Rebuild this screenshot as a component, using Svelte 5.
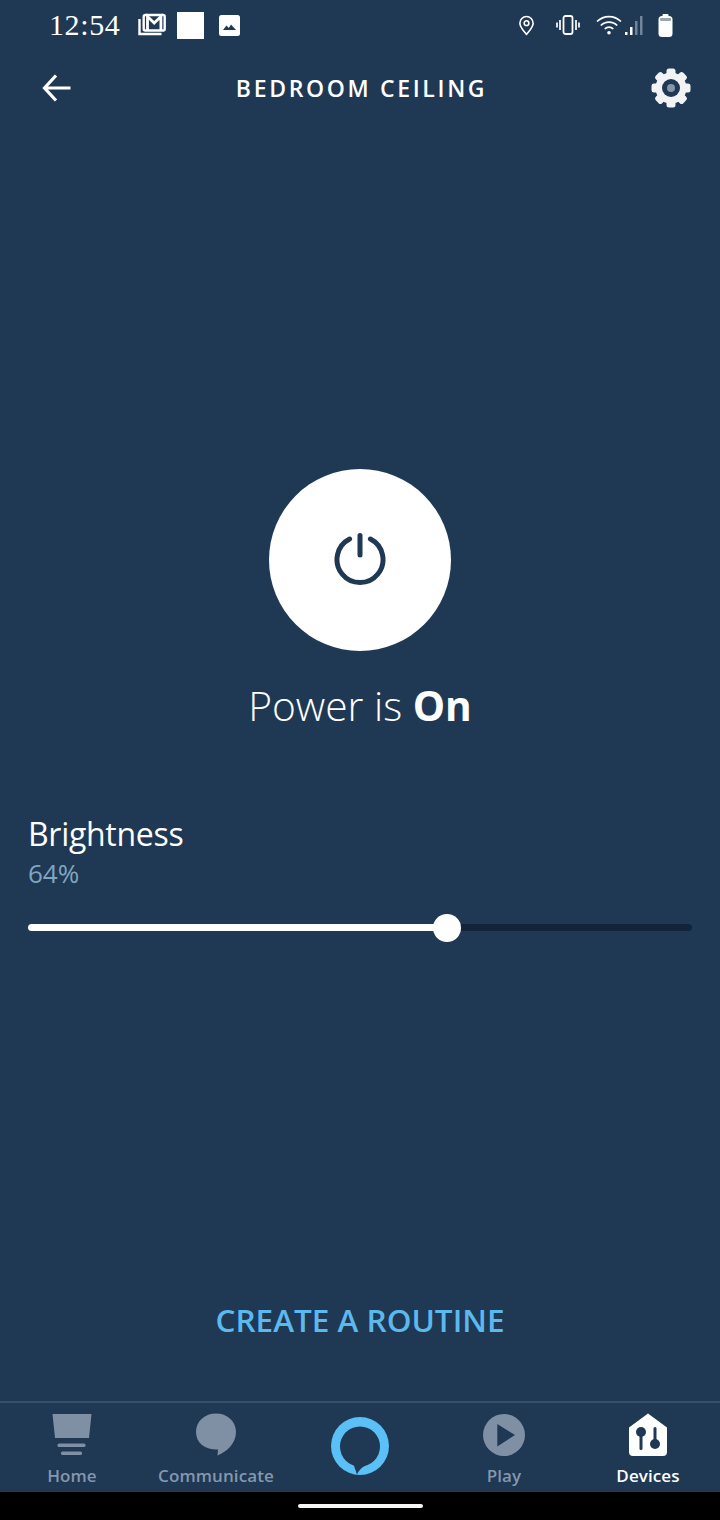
<script>
  const tabs = [
    { id: 'home', label: 'Home' },
    { id: 'comm', label: 'Communicate' },
    { id: 'alexa', label: '' },
    { id: 'play', label: 'Play' },
    { id: 'devices', label: 'Devices', active: true }
  ];
  const brightness = 64;
  const teeth = [0, 45, 90, 135];
</script>

<div class="screen">
  <div class="status">
    <span class="time">12:54</span>
    <svg class="ic-gmail" viewBox="0 0 28 24" width="28" height="24">
      <path d="M1.500 6v15h22" fill="none" stroke="#fff" stroke-width="2.400"/>
      <rect x="5.700" y="2" width="21" height="15.500" rx="1.500" fill="none" stroke="#fff" stroke-width="2.400"/>
      <path d="M9.500 17V3.500l6.700 6.500 6.700-6.500V17" fill="none" stroke="#fff" stroke-width="2.800"/>
    </svg>
    <span class="square"></span>
    <svg class="ic-photo" viewBox="0 0 21 21" width="21" height="21">
      <rect width="21" height="21" rx="2.500" fill="#fff"/>
      <path d="M4 15l3.500-4.500 2.300 2.500 2.200-3.500 5 5.500z" fill="#1f3853"/>
    </svg>
    <span class="spacer"></span>
    <svg class="ic-pin" viewBox="0 0 18 22" width="17" height="21">
      <path d="M9 20.500C5 15.500 2 12.500 2 8.500a7 7 0 0 1 14 0c0 4-3 7-7 12z" fill="none" stroke="#fff" stroke-width="1.700" stroke-linejoin="round"/>
      <circle cx="9" cy="8.500" r="2.500" fill="none" stroke="#fff" stroke-width="1.700"/>
    </svg>
    <svg class="ic-vib" viewBox="0 0 24 20" width="24" height="20">
      <rect x="7.500" y="1" width="9" height="18" rx="2" fill="none" stroke="#fff" stroke-width="1.800"/>
      <path d="M4 5v10M1 7.500v5M20 5v10M23 7.500v5" stroke="#fff" stroke-width="1.700"/>
    </svg>
    <svg class="ic-wifi" viewBox="0 0 26 20" width="26" height="20">
      <path d="M1 6.500a17 17 0 0 1 24 0M4.800 10.500a11.500 11.500 0 0 1 16.400 0M8.700 14a6 6 0 0 1 8.600 0" fill="none" stroke="#fff" stroke-width="1.700"/>
      <circle cx="13" cy="17.800" r="1.800" fill="#fff"/>
    </svg>
    <svg class="ic-signal" viewBox="0 0 19 21" width="19" height="21">
      <rect x="0" y="17" width="2.500" height="3" fill="#fff"/>
      <rect x="5" y="12" width="2.500" height="8" fill="#fff"/>
      <rect x="10" y="6" width="2.500" height="14" fill="#71849a"/>
      <rect x="15" y="1" width="2.500" height="19" fill="#71849a"/>
    </svg>
    <svg class="ic-batt" viewBox="0 0 15 23" width="15" height="23">
      <rect x="4.500" y="0" width="6" height="3" rx="1" fill="#fff"/>
      <rect x="0.500" y="2" width="14" height="21" rx="3.500" fill="#fff"/>
      <rect x="2" y="4" width="11" height="3" rx="1" fill="#1f3853" opacity="0.450"/>
    </svg>
  </div>

  <header class="bar">
    <button class="iconbtn" aria-label="Back">
      <svg viewBox="0 0 30 30" width="30" height="30">
        <path d="M2.500 15h26M14 2.500 2.500 15 14 27.500" fill="none" stroke="#fff" stroke-width="3.200"/>
      </svg>
    </button>
    <h1>BEDROOM CEILING</h1>
    <button class="iconbtn" aria-label="Settings">
      <svg viewBox="0 0 40 40" width="40" height="40">
        {#each teeth as a}
          <rect x="15.500" y="0.500" width="9" height="39" rx="2.500" fill="#f2f3f4" transform="rotate({a} 20 20)"/>
        {/each}
        <circle cx="20" cy="20" r="15.500" fill="#f2f3f4"/>
        <circle cx="20" cy="20" r="9" fill="#1f3853"/>
        <circle cx="20" cy="20" r="4" fill="#8496a8"/>
      </svg>
    </button>
  </header>

  <main>
    <section class="power">
      <button class="power-btn" aria-label="Toggle power">
        <svg viewBox="0 0 52 54" width="52" height="54">
          <path d="M15.600 6a23 23 0 1 0 20.800 0" fill="none" stroke="#1f3853" stroke-width="5" stroke-linecap="round"/>
          <path d="M26 2.500v19.500" stroke="#1f3853" stroke-width="5" stroke-linecap="round"/>
        </svg>
      </button>
      <p class="power-label">Power is <strong>On</strong></p>
    </section>

    <section class="brightness">
      <div class="b-title">Brightness</div>
      <div class="b-value">{brightness}%</div>
      <div class="track">
        <div class="fill" style="width: {brightness - 0.85}%">
          <span class="thumb"></span>
        </div>
      </div>
    </section>

    <div class="routine">CREATE A ROUTINE</div>
  </main>

  <nav class="tabs">
    {#each tabs as t}
      <div class="tab" class:active={t.active}>
        {#if t.id === 'home'}
          <svg viewBox="0 0 40 44" width="40" height="44">
            <path d="M0.500 1h39l-2.500 24H3z" fill="#7f90a5"/>
            <rect x="5.500" y="30.500" width="28" height="3.500" rx="1.500" fill="#7f90a5"/>
            <rect x="9" y="38.500" width="21" height="3.500" rx="1.500" fill="#7f90a5"/>
          </svg>
        {:else if t.id === 'comm'}
          <svg viewBox="0 0 40 44" width="40" height="44">
            <path d="M20 0.500C31 0.500 40 8 40 19c0 12-10 20-18.500 23.500L22 36.500C9 37 0 30 0 19 0 8 9 .5 20 .5z" fill="#7f90a5"/>
          </svg>
        {:else if t.id === 'alexa'}
          <svg class="alexa" viewBox="0 0 58 58" width="58" height="58">
            <circle cx="29" cy="29" r="29" fill="#5bc0f5"/>
            <circle cx="29" cy="29.500" r="20" fill="#1f3853"/>
            <path d="M22 46 L26 57.500 Q28 52 35 48z" fill="#1f3853"/>
          </svg>
        {:else if t.id === 'play'}
          <svg viewBox="0 0 44 44" width="42" height="42">
            <circle cx="22" cy="22" r="22" fill="#7f90a5"/>
            <path d="M15 10.500v23.500L33.500 22z" fill="#1f3853"/>
          </svg>
        {:else}
          <svg viewBox="0 0 40 44" width="40" height="42">
            <path d="M20 0.500 39 14.500V39a4 4 0 0 1-4 4H5a4 4 0 0 1-4-4V14.500z" fill="#fff"/>
            <circle cx="13" cy="19" r="5" fill="#1f3853"/>
            <rect x="11.500" y="20" width="3" height="17" rx="1.500" fill="#1f3853"/>
            <circle cx="27" cy="31" r="5" fill="#1f3853"/>
            <rect x="25.500" y="14" width="3" height="18" rx="1.500" fill="#1f3853"/>
          </svg>
        {/if}
        {#if t.label}<span>{t.label}</span>{/if}
      </div>
    {/each}
  </nav>

  <div class="gesture"><span></span></div>
</div>

<style>
  :global(body) { margin: 0; background: #1f3853; }
  .screen {
    width: 720px;
    height: 1520px;
    display: flex;
    flex-direction: column;
    background: #1f3853;
    color: #fff;
    font-family: "Open Sans", "Noto Sans", sans-serif;
    overflow: hidden;
  }
  .status {
    height: 52px;
    box-sizing: border-box;
    padding: 0 47px 2px 49px;
    display: flex;
    align-items: center;
  }
  .time { font-family: "Liberation Serif", serif; font-size: 30px; letter-spacing: 0.6px; width: 89px; }
  .ic-gmail { margin-right: 11px; }
  .square { width: 27px; height: 27px; background: #fff; margin-right: 15px; }
  .spacer { flex: 1; }
  .ic-vib { margin-left: 21px; }
  .ic-wifi { margin-left: 16px; }
  .ic-signal { margin-left: 3px; }
  .ic-batt { margin-left: 14px; }
  .bar {
    height: 72px;
    padding: 0 29px 0 42px;
    display: flex;
    align-items: center;
    justify-content: space-between;
  }
  .bar h1 {
    margin: 0;
    font-size: 23px;
    font-weight: 600;
    letter-spacing: 2.65px;
    line-height: 1;
  }
  .iconbtn { background: none; border: 0; padding: 0; display: flex; }
  main { flex: 1; display: flex; flex-direction: column; padding: 0 28px; min-height: 0; }
  .power { display: flex; flex-direction: column; align-items: center; padding-top: 345px; }
  .power-btn {
    width: 182px; height: 182px; border-radius: 50%;
    background: #fff; border: 0; padding: 0;
    display: flex; align-items: center; justify-content: center;
  }
  .power-label {
    margin: 28px 0 0;
    font-size: 40.700px;
    line-height: 52px;
    font-weight: 300;
  }
  .power-label strong { font-weight: 700; }
  .brightness { margin-top: 82px; }
  .b-title { font-size: 32px; line-height: 42px; letter-spacing: -0.3px; }
  .b-value { font-size: 26px; line-height: 36px; color: #7fa6c0; }
  .track {
    margin-top: 33px;
    height: 7px;
    border-radius: 4px;
    background: #11243a;
  }
  .fill { position: relative; height: 100%; background: #fff; border-radius: 4px; }
  .thumb {
    position: absolute; right: -14px; top: -10px;
    width: 28px; height: 28px; border-radius: 50%; background: #fff;
  }
  .routine {
    margin-top: auto;
    margin-bottom: 59px;
    text-align: center;
    font-size: 31.500px;
    line-height: 44px;
    font-weight: 600;
    color: #5cb9ee;
  }
  .tabs {
    height: 91px;
    box-sizing: border-box;
    border-top: 2px solid #36506b;
    display: grid;
    grid-template-columns: repeat(5, 1fr);
  }
  .tab {
    display: flex;
    flex-direction: column;
    align-items: center;
    justify-content: flex-start;
    padding-top: 10px;
    color: #8497ae;
    font-size: 17px;
    line-height: 24px;
    font-weight: 600;
    letter-spacing: 0.1px;
  }
  .tab svg { height: 44px; flex: none; margin-bottom: 7px; }
  .tab svg.alexa { height: 58px; margin-top: 4px; margin-bottom: 0; }
  .tab.active { color: #fff; }
  .gesture {
    height: 28px;
    background: #000;
    display: flex;
    align-items: center;
    justify-content: center;
  }
  .gesture span { width: 125px; height: 4px; border-radius: 2px; background: #f5f5f5; }
</style>
